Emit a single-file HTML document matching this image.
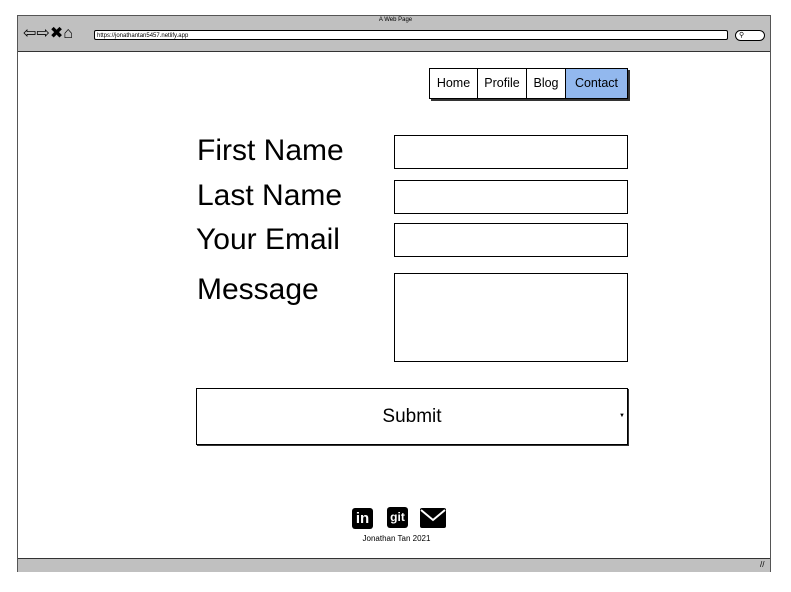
<!DOCTYPE html>
<html><head><style>
body{margin:0;width:791px;height:592px;background:#fff;font-family:"Liberation Sans",sans-serif;position:relative;overflow:hidden}
.a{position:absolute}
.box{position:absolute;border:1px solid #000;background:#fff;box-sizing:border-box}
.lbl{position:absolute;font-size:30px;color:#000}
</style></head><body>
<div class="a" style="left:17px;top:15px;width:754px;height:557px;border:1px solid #555;box-sizing:border-box;background:#fff"></div>
<div class="a" style="left:18px;top:16px;width:752px;height:35px;background:#c0c0c0;border-bottom:1px solid #333"></div>
<div class="a" style="left:0;top:17px;width:791px;text-align:center;font-size:6px">A Web Page</div>
<div class="a" style="left:23px;top:23px;font-size:16px;letter-spacing:0px">⇦⇨✖⌂</div>
<div class="a" style="left:94px;top:30px;width:634px;height:10px;border:1px solid #000;background:#fff;border-radius:2px;font-size:6px;line-height:10px;padding-left:2px;box-sizing:border-box">https://jonathantan5457.netlify.app</div>
<div class="a" style="left:735px;top:30px;width:30px;height:11px;border:1px solid #000;background:#fff;border-radius:6px;box-sizing:border-box;font-size:7px;line-height:9px;padding-left:3px">⚲</div>
<div class="a" style="left:18px;top:558px;width:752px;height:13px;background:#c0c0c0;border-top:1px solid #333"></div>
<div class="a" style="left:760px;top:560px;font-size:8px">//</div>

<div class="a" style="left:429px;top:68px;height:29px;display:flex;border:1px solid #000;box-shadow:2px 2px 0 #333;font-size:12.5px">
<div style="width:47px;line-height:29px;text-align:center;border-right:1px solid #000">Home</div>
<div style="width:48px;line-height:29px;text-align:center;border-right:1px solid #000">Profile</div>
<div style="width:38px;line-height:29px;text-align:center;border-right:1px solid #000">Blog</div>
<div style="width:61px;line-height:29px;text-align:center;background:#92b8ee">Contact</div>
</div>

<div class="lbl" style="left:197px;top:134px">First Name</div>
<div class="lbl" style="left:197px;top:179px">Last Name</div>
<div class="lbl" style="left:196px;top:223px">Your Email</div>
<div class="lbl" style="left:197px;top:273px">Message</div>
<div class="box" style="left:394px;top:135px;width:234px;height:34px"></div>
<div class="box" style="left:394px;top:180px;width:234px;height:34px"></div>
<div class="box" style="left:394px;top:223px;width:234px;height:34px"></div>
<div class="box" style="left:394px;top:273px;width:234px;height:89px"></div>
<div class="box" style="left:196px;top:388px;width:432px;height:57px;box-shadow:1px 1px 0 #333;text-align:center;line-height:55px;font-size:19px">Submit<span style="position:absolute;right:2px;top:0;font-size:6px">▼</span></div>

<div class="a" style="left:352px;top:508px;width:21px;height:21px;background:#000;border-radius:3px;color:#fff;font-weight:bold;font-size:15px;text-align:center;line-height:22px">in</div>
<div class="a" style="left:387px;top:507px;width:21px;height:21px;background:#000;border-radius:3px;color:#fff;font-weight:bold;font-size:12px;text-align:center;line-height:20px">git</div>
<svg class="a" style="left:420px;top:508px" width="26" height="20" viewBox="0 0 26 20"><rect width="26" height="20" rx="2" fill="#000"/><path d="M1 2 L13 12 L25 2" stroke="#fff" stroke-width="2" fill="none"/></svg>
<div class="a" style="left:0;top:534px;width:793px;text-align:center;font-size:8px">Jonathan Tan 2021</div>
</body></html>
